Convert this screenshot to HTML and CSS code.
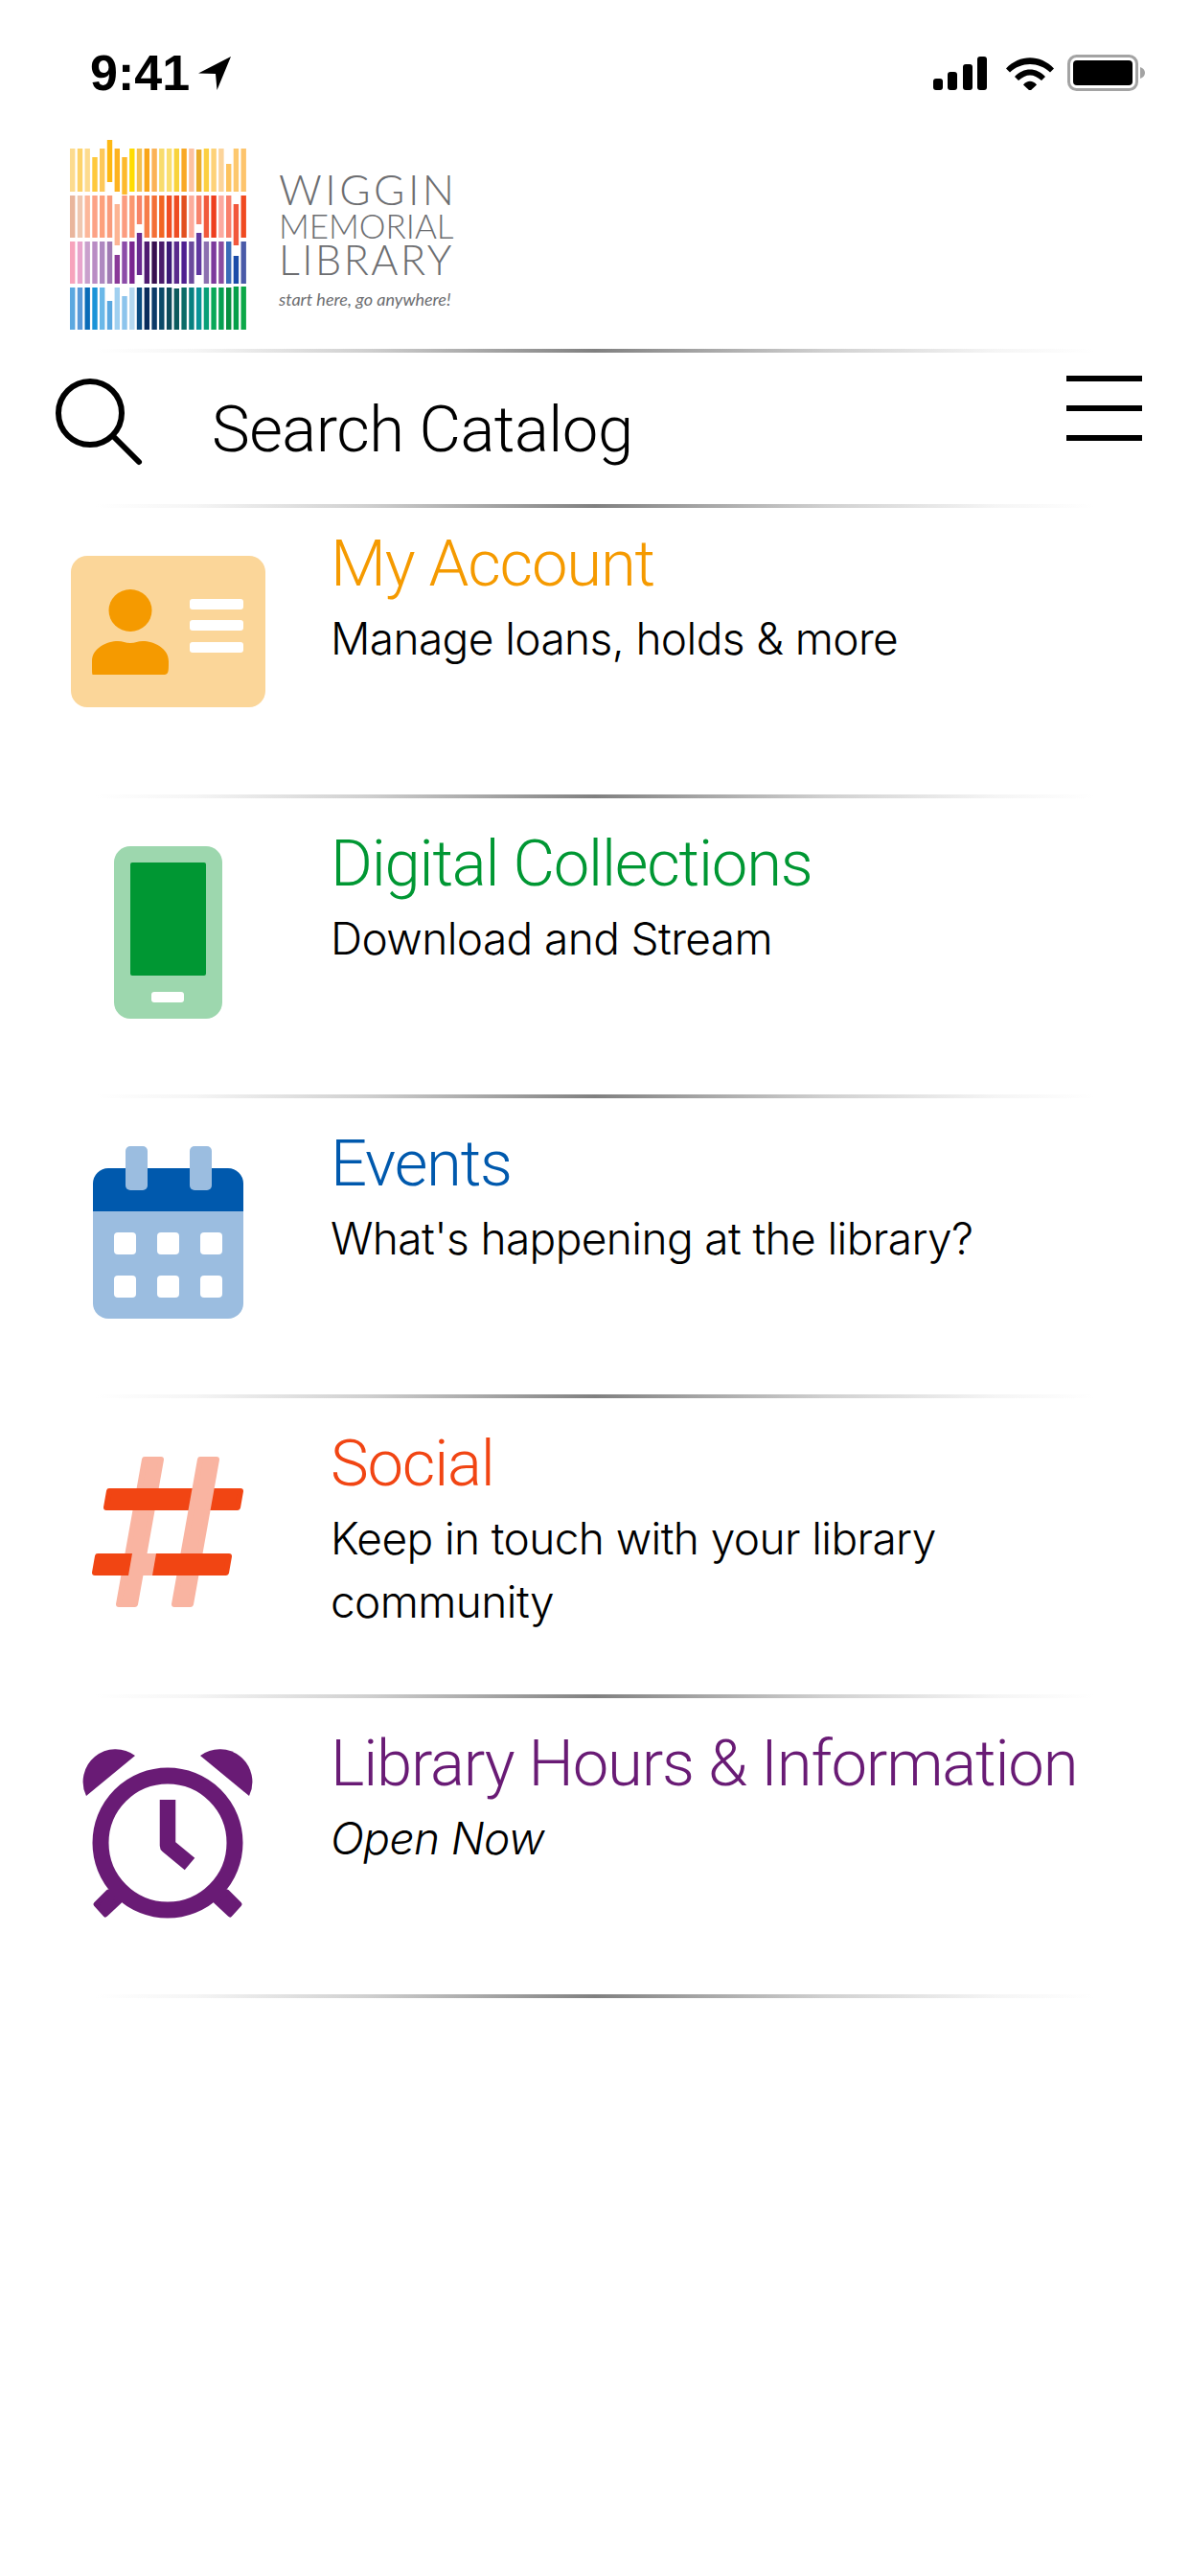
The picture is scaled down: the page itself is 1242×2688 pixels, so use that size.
FILE: index.html
```html
<!DOCTYPE html>
<html lang="en">
<head>
    <meta charset="UTF-8">
    <meta name="viewport" content="width=device-width, initial-scale=1.0">
    <title>Wiggin Memorial Library</title>
    <link rel="stylesheet" href="styles.css">
</head>
<body>
    <div class="status-bar">
        <div class="status-left">
            <span class="time">9:41</span>
            <svg class="arrow" width="36" height="36" viewBox="0 0 36 36"><path d="M35 1 1 18.500 19 19 20.500 36z"/></svg>
        </div>
        <div class="status-right">
            <svg class="signal" width="58" height="36" viewBox="0 0 58 36"><rect x="1" y="24" width="10" height="12" rx="3"/><rect x="16" y="17" width="10" height="19" rx="3"/><rect x="32" y="9" width="10" height="27" rx="3"/><rect x="47" y="1" width="10" height="35" rx="3"/></svg>
            <svg width="50" height="36" viewBox="0 0 50 36"><path d="M0 13.500C14-1.500 36-1.500 50 13.500L46 17.500C34 6 16 6 4 17.500z"/><path d="M9 22C18 12 32 12 41 22L37 26C29 18.500 21 18.500 13 26z"/><path d="M18 30.500C22 25.500 28 25.500 32 30.500L25 37z"/></svg>
            <svg width="82" height="38" viewBox="0 0 82 38"><rect x="1.500" y="1.500" width="71" height="35" rx="8" fill="none" stroke="#a3a3a3" stroke-width="3"/><rect x="6" y="6" width="62" height="26" rx="4"/><path d="M76 13c3 1 5 3 5 6s-2 5-5 6z" fill="#a3a3a3"/></svg>
        </div>
    </div>

    <div class="logo">
        <svg class="logo-bars" width="185" height="198" viewBox="0 0 185 198">
            <rect x="0" y="9" width="5.400" height="45" fill="#fcdb8e"/><rect x="7.800" y="9" width="5.400" height="45" fill="#fdd36a"/><rect x="15.500" y="9" width="5.400" height="45" fill="#fddb8e"/><rect x="23.300" y="18" width="5.400" height="36" fill="#fec93c"/><rect x="31" y="9" width="5.400" height="45" fill="#fdc85a"/><rect x="38.800" y="0" width="5.400" height="44" fill="#fdb813"/><rect x="46.600" y="9" width="5.400" height="45" fill="#fdb321"/><rect x="54.300" y="18" width="5.400" height="39" fill="#fdb92d"/><rect x="62.100" y="9" width="5.400" height="45" fill="#ffdd00"/><rect x="69.800" y="9" width="5.400" height="45" fill="#f4c150"/><rect x="77.600" y="9" width="5.400" height="45" fill="#f9a51a"/><rect x="85.400" y="9" width="5.400" height="45" fill="#fbb257"/><rect x="93.100" y="9" width="5.400" height="45" fill="#f8dc6c"/><rect x="100.900" y="9" width="5.400" height="45" fill="#fadf70"/><rect x="108.600" y="9" width="5.400" height="45" fill="#f8d33c"/><rect x="116.400" y="9" width="5.400" height="45" fill="#f9a825"/><rect x="124.200" y="9" width="5.400" height="45" fill="#fdc2a0"/><rect x="131.900" y="10" width="5.400" height="44" fill="#e9ac2a"/><rect x="139.700" y="9" width="5.400" height="45" fill="#fcd040"/><rect x="147.400" y="9" width="5.400" height="45" fill="#fdd278"/><rect x="155.200" y="9" width="5.400" height="45" fill="#fcd49a"/><rect x="163" y="25" width="5.400" height="29" fill="#fdc35f"/><rect x="170.700" y="9" width="5.400" height="45" fill="#fdc86e"/><rect x="178.500" y="9" width="5.400" height="45" fill="#fdc46c"/>
            <rect x="0" y="58" width="5.400" height="44" fill="#e9b59c"/><rect x="7.800" y="58" width="5.400" height="44" fill="#efc7b0"/><rect x="15.500" y="58" width="5.400" height="44" fill="#fcb79a"/><rect x="23.300" y="58" width="5.400" height="44" fill="#fca286"/><rect x="31" y="58" width="5.400" height="44" fill="#fda07c"/><rect x="38.800" y="58" width="5.400" height="44" fill="#f99c7c"/><rect x="46.600" y="67" width="5.400" height="43" fill="#fcb594"/><rect x="54.300" y="58" width="5.400" height="44" fill="#fb9c80"/><rect x="62.100" y="58" width="5.400" height="44" fill="#fb9770"/><rect x="69.800" y="58" width="5.400" height="30" fill="#f78568"/><rect x="77.600" y="58" width="5.400" height="44" fill="#f67d4a"/><rect x="85.400" y="58" width="5.400" height="44" fill="#f36f36"/><rect x="93.100" y="58" width="5.400" height="44" fill="#f26522"/><rect x="100.900" y="58" width="5.400" height="44" fill="#f04e23"/><rect x="108.600" y="58" width="5.400" height="44" fill="#ee4c23"/><rect x="116.400" y="58" width="5.400" height="44" fill="#e2501f"/><rect x="124.200" y="58" width="5.400" height="44" fill="#fcac9c"/><rect x="131.900" y="58" width="5.400" height="30" fill="#f7836c"/><rect x="139.700" y="58" width="5.400" height="44" fill="#f15a3c"/><rect x="147.400" y="58" width="5.400" height="44" fill="#ee3e1e"/><rect x="155.200" y="58" width="5.400" height="44" fill="#fcaaa0"/><rect x="163" y="58" width="5.400" height="44" fill="#f9806c"/><rect x="170.700" y="67" width="5.400" height="43" fill="#f2583c"/><rect x="178.500" y="58" width="5.400" height="44" fill="#f04a20"/>
            <rect x="0" y="106" width="5.400" height="44" fill="#f7a3bc"/><rect x="7.800" y="106" width="5.400" height="44" fill="#e8a4cc"/><rect x="15.500" y="106" width="5.400" height="44" fill="#c9a0cc"/><rect x="23.300" y="106" width="5.400" height="44" fill="#b98cc4"/><rect x="31" y="106" width="5.400" height="44" fill="#ae88c0"/><rect x="38.800" y="106" width="5.400" height="44" fill="#a07ab4"/><rect x="46.600" y="120" width="5.400" height="30" fill="#8a3a98"/><rect x="54.300" y="106" width="5.400" height="44" fill="#8c4ca8"/><rect x="62.100" y="106" width="5.400" height="44" fill="#7a2590"/><rect x="69.800" y="97" width="5.400" height="44" fill="#6a2a90"/><rect x="77.600" y="106" width="5.400" height="44" fill="#4f1a70"/><rect x="85.400" y="106" width="5.400" height="44" fill="#38104f"/><rect x="93.100" y="106" width="5.400" height="44" fill="#4a1c6c"/><rect x="100.900" y="106" width="5.400" height="44" fill="#3d1a78"/><rect x="108.600" y="106" width="5.400" height="44" fill="#5a2a8c"/><rect x="116.400" y="106" width="5.400" height="44" fill="#4f2090"/><rect x="124.200" y="106" width="5.400" height="44" fill="#6a4a9c"/><rect x="131.900" y="97" width="5.400" height="44" fill="#6038a0"/><rect x="139.700" y="106" width="5.400" height="44" fill="#8c70b0"/><rect x="147.400" y="106" width="5.400" height="44" fill="#7c3a9c"/><rect x="155.200" y="106" width="5.400" height="44" fill="#8a4ca0"/><rect x="163" y="106" width="5.400" height="44" fill="#3a6cb8"/><rect x="170.700" y="121" width="5.400" height="29" fill="#1a4ca8"/><rect x="178.500" y="106" width="5.400" height="44" fill="#4a5aa8"/>
            <rect x="0" y="154" width="5.400" height="44" fill="#5ba8e0"/><rect x="7.800" y="154" width="5.400" height="44" fill="#5a9ad8"/><rect x="15.500" y="154" width="5.400" height="44" fill="#0a6cb8"/><rect x="23.300" y="154" width="5.400" height="44" fill="#1a94d8"/><rect x="31" y="154" width="5.400" height="44" fill="#6ab8e8"/><rect x="38.800" y="168" width="5.400" height="30" fill="#5aa8e0"/><rect x="46.600" y="154" width="5.400" height="44" fill="#a0d0f0"/><rect x="54.300" y="163" width="5.400" height="35" fill="#8cc4ec"/><rect x="62.100" y="154" width="5.400" height="44" fill="#b4d8f0"/><rect x="69.800" y="154" width="5.400" height="44" fill="#0a4c80"/><rect x="77.600" y="154" width="5.400" height="44" fill="#0a2c5c"/><rect x="85.400" y="154" width="5.400" height="44" fill="#0c3a68"/><rect x="93.100" y="154" width="5.400" height="44" fill="#0a4a68"/><rect x="100.900" y="154" width="5.400" height="44" fill="#0c4c5c"/><rect x="108.600" y="155" width="5.400" height="43" fill="#0a5a5c"/><rect x="116.400" y="154" width="5.400" height="44" fill="#0a6c68"/><rect x="124.200" y="154" width="5.400" height="44" fill="#088080"/><rect x="131.900" y="154" width="5.400" height="44" fill="#0a9498"/><rect x="139.700" y="154" width="5.400" height="44" fill="#08a078"/><rect x="147.400" y="154" width="5.400" height="44" fill="#08a858"/><rect x="155.200" y="154" width="5.400" height="44" fill="#06a050"/><rect x="163" y="154" width="5.400" height="44" fill="#089040"/><rect x="170.700" y="153" width="5.400" height="45" fill="#06a04a"/><rect x="178.500" y="153" width="5.400" height="45" fill="#0ca848"/>
        </svg>
        <div class="logo-text">
            <div class="logo-wiggin">WIGGIN</div>
            <div class="logo-memorial">MEMORIAL</div>
            <div class="logo-library">LIBRARY</div>
            <div class="logo-tag">start here, go anywhere!</div>
        </div>
    </div>

    <div class="divider"></div>

    <div class="search-row">
        <svg class="search-icon" width="92" height="92" viewBox="0 0 92 92"><circle cx="36" cy="36" r="33" fill="none" stroke="#000" stroke-width="6"/><path d="M62 62 87 87" stroke="#000" stroke-width="6" stroke-linecap="round" fill="none"/></svg>
        <span class="search-text">Search Catalog</span>
        <div class="menu-icon"><span></span><span></span><span></span></div>
    </div>

    <div class="divider"></div>

    <div class="menu-item first-item">
        <div class="item-icon">
            <svg width="203" height="158" viewBox="0 0 203 158"><rect width="203" height="158" rx="17" fill="#fbd699"/><ellipse cx="62" cy="57" rx="22.500" ry="22" fill="#f59a00"/><path d="M23 124c-1 0-1-2-1-14 0-14 16-21 27-21 5 0 8 2 13 2s8-2 13-2c11 0 27 7 27 21 0 12 0 14-6 14z" fill="#f59a00"/><rect x="124" y="45" width="56" height="11" rx="3" fill="#fff"/><rect x="124" y="67" width="56" height="11" rx="3" fill="#fff"/><rect x="124" y="90" width="56" height="11" rx="3" fill="#fff"/></svg>
        </div>
        <div class="item-text">
            <div class="item-title orange">My Account</div>
            <div class="item-sub">Manage loans, holds &amp; more</div>
        </div>
    </div>
    <div class="divider"></div>

    <div class="menu-item">
        <div class="item-icon">
            <svg width="113" height="180" viewBox="0 0 113 180"><rect width="113" height="180" rx="17" fill="#9dd7ae"/><rect x="17" y="17" width="79" height="118" rx="2" fill="#009733"/><rect x="39" y="152" width="34" height="11" rx="3" fill="#fff"/></svg>
        </div>
        <div class="item-text">
            <div class="item-title green">Digital Collections</div>
            <div class="item-sub">Download and Stream</div>
        </div>
    </div>
    <div class="divider"></div>

    <div class="menu-item">
        <div class="item-icon">
            <svg width="157" height="180" viewBox="0 0 157 180"><path d="M0 68H157V164a16 16 0 0 1-16 16H16a16 16 0 0 1-16-16z" fill="#9bbde0"/><path d="M0 68V39a16 16 0 0 1 16-16H141a16 16 0 0 1 16 16V68z" fill="#0059ad"/><rect x="34" y="0" width="23" height="46" rx="5" fill="#9bbde0"/><rect x="101" y="0" width="23" height="46" rx="5" fill="#9bbde0"/><rect x="22" y="90" width="23" height="23" rx="4" fill="#fff"/><rect x="67" y="90" width="23" height="23" rx="4" fill="#fff"/><rect x="112" y="90" width="23" height="23" rx="4" fill="#fff"/><rect x="22" y="135" width="23" height="23" rx="4" fill="#fff"/><rect x="67" y="135" width="23" height="23" rx="4" fill="#fff"/><rect x="112" y="135" width="23" height="23" rx="4" fill="#fff"/></svg>
        </div>
        <div class="item-text">
            <div class="item-title blue">Events</div>
            <div class="item-sub">What's happening at the library?</div>
        </div>
    </div>
    <div class="divider"></div>

    <div class="menu-item">
        <div class="item-icon social-icon">
            <svg width="158" height="158" viewBox="0 0 158 158" stroke-width="6" stroke-linejoin="round">
                <polygon points="55,3 72,3 45,154 28,154" fill="#f9b4a1" stroke="#f9b4a1"/>
                <polygon points="18,36 155,36 152,53 15,53" fill="#f14513" stroke="#f14513"/>
                <polygon points="113,3 130,3 103,154 86,154" fill="#f9b4a1" stroke="#f9b4a1"/>
                <polygon points="6,104 143,104 140,121 3,121" fill="#f14513" stroke="#f14513"/>
                <polygon points="42,101 67,101 63,124 38,124" fill="#f9b4a1"/>
            </svg>
        </div>
        <div class="item-text">
            <div class="item-title red">Social</div>
            <div class="item-sub">Keep in touch with your library community</div>
        </div>
    </div>
    <div class="divider"></div>

    <div class="menu-item">
        <div class="item-icon">
            <svg width="180" height="180" viewBox="0 0 180 180" fill="#691b75">
                <polygon points="28,152 15,165 25,176 40,162" stroke="#691b75" stroke-width="5" stroke-linejoin="round"/>
                <polygon points="152,152 165,165 155,176 140,162" stroke="#691b75" stroke-width="5" stroke-linejoin="round"/>
                <circle cx="90" cy="101" r="70" fill="#fff" stroke="#691b75" stroke-width="17"/>
                <path d="M5 52A34 34 0 0 1 56 10z"/>
                <path d="M175 52A34 34 0 0 0 124 10z"/>
                <path d="M90 56V104L113 123" fill="none" stroke="#691b75" stroke-width="16.500" stroke-linejoin="round"/>
            </svg>
        </div>
        <div class="item-text">
            <div class="item-title purple">Library Hours &amp; Information</div>
            <div class="item-sub italic">Open Now</div>
        </div>
    </div>
    <div class="divider"></div>
</body>
</html>
```
FILE: styles.css
```css
body {
    font-family: Inter, "Liberation Sans", sans-serif;
    margin: 0;
    padding: 0;
    background-color: white;
    color: black;
}
.status-bar {
    display: flex;
    justify-content: space-between;
    align-items: center;
    height: 146px;
    padding: 6px 46px 0 94px;
    box-sizing: border-box;
}
.status-left {
    display: flex;
    align-items: center;
    gap: 8px;
}
.time {
    font-family: "Liberation Sans", sans-serif;
    font-size: 52px;
    font-weight: bold;
}
.status-right {
    display: flex;
    align-items: center;
    gap: 14px;
}
.signal {
    margin-right: 5px;
}
.logo {
    display: flex;
    align-items: flex-end;
    height: 198px;
    padding: 0 0 0 73px;
    gap: 33px;
}
.logo-bars {
    flex: none;
}
.logo-text {
    font-family: Lato, sans-serif;
    color: #6d6e71;
    font-weight: 300;
    line-height: 1;
    padding-bottom: 23px;
}
.logo-wiggin {
    font-size: 44px;
    letter-spacing: 3.500px;
    margin-bottom: -1px;
}
.logo-memorial {
    font-size: 35px;
}
.logo-library {
    font-size: 43px;
    letter-spacing: 2.500px;
    margin-top: -4px;
}
.logo-tag {
    font-size: 18px;
    font-style: italic;
    font-weight: 400;
    margin-top: 11px;
}
.divider {
    height: 4px;
    margin: 0 100px;
    background: linear-gradient(to right, rgba(128, 128, 128, 0), #f5f5f5 10%, #d0d0d0 27%, #808080 50%, #d0d0d0 73%, #f5f5f5 90%, rgba(128, 128, 128, 0));
}
.logo + .divider {
    margin-top: 20px;
}
.search-row {
    display: flex;
    height: 158px;
    padding: 0 50px 0 58px;
}
.search-icon {
    margin-top: 27px;
}
.search-text {
    font-family: Roboto, sans-serif;
    font-size: 67px;
    font-weight: 300;
    letter-spacing: -0.5px;
    margin: 41px 0 0 71px;
    flex: 1;
}
.menu-icon {
    display: flex;
    flex-direction: column;
    gap: 25px;
    width: 79px;
    margin-top: 24px;
}
.menu-icon span {
    height: 6px;
    background-color: black;
}
.menu-item {
    display: flex;
    height: 309px;
}
.first-item {
    height: 299px;
}
.item-icon {
    flex: none;
    width: 345px;
    display: flex;
    justify-content: center;
    align-items: flex-start;
    padding: 50px 0 0 5px;
    box-sizing: border-box;
}
.social-icon {
    padding-top: 61px;
}
.item-text {
    padding-top: 32px;
    flex: 1;
    padding-right: 100px;
}
.first-item .item-text {
    padding-top: 22px;
}
.item-title {
    font-family: Roboto, sans-serif;
    font-size: 67px;
    font-weight: 300;
    letter-spacing: -1.2px;
    line-height: 72px;
    white-space: nowrap;
}
.item-sub {
    font-size: 46px;
    font-weight: 300;
    letter-spacing: -0.6px;
    line-height: 66px;
    margin-top: 9px;
}
.italic {
    font-style: italic;
}
.orange { color: #f59a00; }
.green { color: #009733; }
.blue { color: #0059ad; }
.red { color: #f14513; }
.purple { color: #691b75; }
```
